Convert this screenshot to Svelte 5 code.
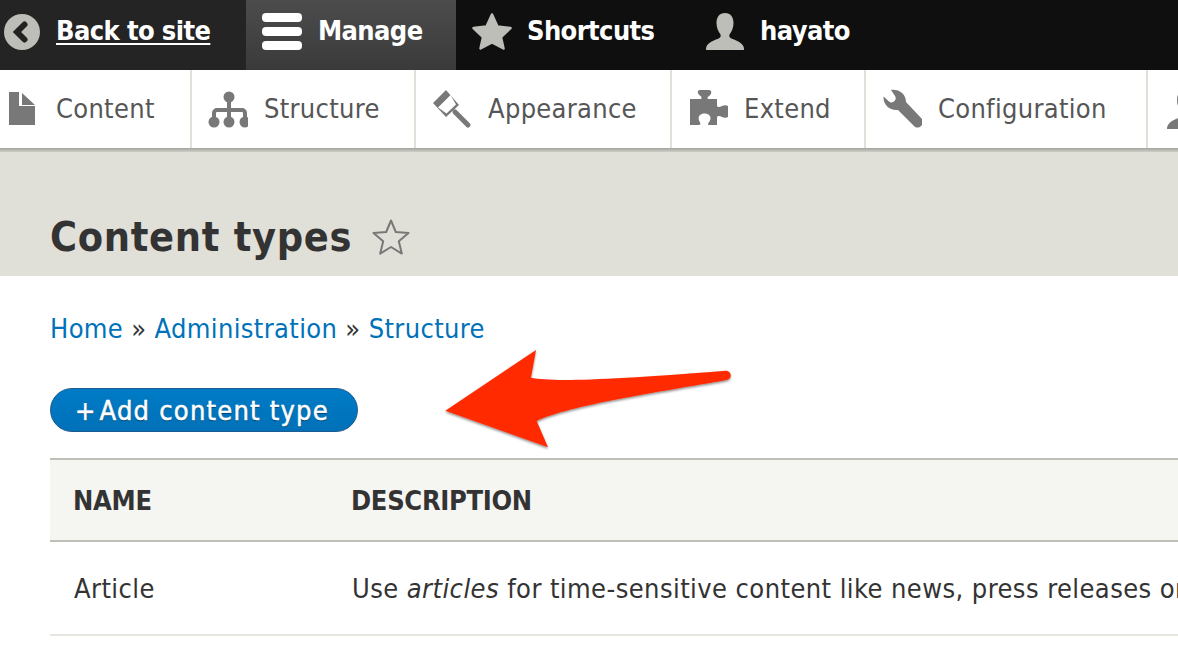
<script>
  const tray = [
    { label: 'Content', icon: 'content', w: 192, vb: '0 0 26 33' },
    { label: 'Structure', icon: 'structure', w: 224, vb: '3 4 40 40' },
    { label: 'Appearance', icon: 'appearance', w: 256, vb: '0 0 40 40' },
    { label: 'Extend', icon: 'extend', w: 194, vb: '3 4 40 40' },
    { label: 'Configuration', icon: 'config', w: 282, vb: '4 4 40 40' },
    { label: 'People', icon: 'people', w: 200, vb: '0 0 40 40' }
  ];
</script>

<div class="page">
  <nav class="bar">
    <a class="tab back" href="#back">
      <svg class="ic-back" viewBox="0 0 36 36"><circle cx="18" cy="18" r="18" fill="#bebeb8"/><path d="M20.500 10.500 13 18l7.500 7.500" fill="none" stroke="#222" stroke-width="6" stroke-linecap="round"/></svg>
      <span class="u">Back to site</span>
    </a>
    <a class="tab manage" href="#manage">
      <svg class="ic-menu" viewBox="0 0 40 37"><g fill="#fff"><rect width="40" height="9" rx="4"/><rect y="14" width="40" height="9" rx="4"/><rect y="28" width="40" height="9" rx="4"/></g></svg>
      <span>Manage</span>
    </a>
    <a class="tab shortcuts" href="#shortcuts">
      <svg class="ic-star" viewBox="0 0 40 37"><path d="M20 1.500 25.500 13.500 38.500 15 29 24 31.500 35.500 20 29.500 8.500 35.500 11 24 1.500 15 14.500 13.500Z" fill="#bebeb8" stroke="#bebeb8" stroke-width="2.500" stroke-linejoin="round"/></svg>
      <span>Shortcuts</span>
    </a>
    <a class="tab user" href="#user">
      <svg class="ic-user" viewBox="0 0 38 37"><path d="M19 0c5.500 0 8.500 4 8.500 10 0 5-2 9-4 11.500-.8 2 .5 3.500 3 4.500 4 1.500 9 3.500 11 7.500.4 1 .5 2 .5 3.500H0c0-1.500.1-2.500.5-3.500 2-4 7-6 11-7.500 2.500-1 3.800-2.500 3-4.500-2-2.500-4-6.500-4-11.500 0-6 3-10 8.500-10Z" fill="#bebeb8"/></svg>
      <span>hayato</span>
    </a>
  </nav>

  <nav class="tray">
    {#each tray as item}
      <a class="item" class:first={item.icon === 'content'} class:last={item.icon === 'people'} href="#{item.icon}" style="width:{item.w}px">
        <svg class="ti" viewBox={item.vb}>
          {#if item.icon === 'content'}
            <path d="M0 0h10v14h16v19H0Z M13 1v12h13Z" fill="#787878"/>
          {:else if item.icon === 'structure'}
            <g fill="#787878"><circle cx="24" cy="12" r="5.500"/><circle cx="9" cy="37" r="5.500"/><circle cx="24" cy="37" r="5.500"/><circle cx="40" cy="37" r="5.500"/></g>
            <path d="M9 37V28a3 3 0 0 1 3-3H37a3 3 0 0 1 3 3V37M24 12V37" fill="none" stroke="#787878" stroke-width="4"/>
          {:else if item.icon === 'appearance'}
            <path d="M14 1 1 14l13 14 13-12Z M18.500 6 6 18.500l8.500 6L24 15.500Z" fill="#787878" fill-rule="evenodd"/>
            <path d="M8 12l7-7" stroke="#787878" stroke-width="6"/>
            <path d="M23 23 36 36" stroke="#787878" stroke-width="5" stroke-linecap="round"/>
          {:else if item.icon === 'extend'}
            <path d="M5 14H15C17 14 17 12 15.500 11 12 9 12 5 15 5H24C27 5 27 9 24 11 22 12 22 14 24 14H32V20C32 23 35 22 37 21 41 19 46 21 46 26.500 46 32 41 34 37 32 35 31 32 30 32 33V40H24C22.500 40 23 38 24.500 36.500 27 33 25 28.500 19.500 28.500 14 28.500 12.500 33 14.500 36.500 15.500 38 16 40 14 40H5Z" fill="#787878"/>
          {:else if item.icon === 'config'}
            <path d="M13 5C21 4 28 9 28 17L44 34C46 37 45 39 43 41 41 43 38 43 36 41L20 25C12 26 5 20 5.500 11.500L11 16.500C13 18 15 17.500 16.500 16 18 14.500 18 12.500 17 11Z" fill="#787878"/>
          {:else}
            <path d="M20 0c6 0 9 5 9 11 0 6-2.500 10-4.500 13-.8 2 .5 4 3 5 4 1.600 9 3.500 11 8 .5 1 .5 2 .5 3H1c0-1 0-2 .5-3 2-4.500 7-6.400 11-8 2.500-1 3.800-3 3-5-2-3-4.500-7-4.500-13 0-6 3-11 9-11Z" fill="#787878"/>
          {/if}
        </svg>
        <span>{item.label}</span>
      </a>
    {/each}
  </nav>
  <div class="edge"></div>

  <header class="head">
    <h1>Content types</h1>
    <svg class="ic-fav" viewBox="0 0 38 38"><path d="M19 2.500 23.800 14l12.700 1-9.700 8.300 3 12.300L19 29l-10.800 6.600 3-12.300L1.500 15l12.700-1Z" fill="none" stroke="#787878" stroke-width="2" stroke-linejoin="round"/></svg>
  </header>

  <main class="main">
    <p class="crumbs"><a href="#home">Home</a> » <a href="#admin">Administration</a> » <a href="#structure">Structure</a></p>
    <a class="btn" href="#add"><span class="plus">+</span>Add content type</a>
    <table>
      <thead><tr><th class="c1">NAME</th><th>DESCRIPTION</th></tr></thead>
      <tbody><tr><td class="c1">Article</td><td>Use <em>articles</em> for time-sensitive content like news, press releases or blog posts.</td></tr></tbody>
    </table>
  </main>

  <svg class="arrow" viewBox="0 0 300 110" aria-hidden="true">
    <defs><filter id="sh" x="-5%" y="-5%" width="110%" height="115%"><feDropShadow dx="0" dy="1.500" stdDeviation="1.200" flood-color="#000" flood-opacity=".45"/></filter></defs>
    <path filter="url(#sh)" fill="#ff2c00" d="M5.300 70.700 96 10l-5 27.700c20 4 70 3 194.500-7 6-.4 7.500 8.500 1 9.300C220 52 130 65 96.700 81l11.300 26.300Z"/>
  </svg>
</div>

<style>
  :global(body) { margin: 0; background: #fff; }
  .page {
    position: relative;
    width: 1178px;
    height: 666px;
    overflow: hidden;
    font-family: "DejaVu Sans Condensed", "DejaVu Sans", "Liberation Sans", sans-serif;
    font-stretch: condensed;
    color: #333;
  }
  a { text-decoration: none; }
  .bar {
    display: flex;
    height: 70px;
    background: #0f0f0f;
  }
  .tab {
    display: flex;
    align-items: center;
    padding-bottom: 8px;
    color: #fff;
    font-weight: 700;
    font-size: 27px;
    letter-spacing: -0.6px;
    white-space: nowrap;
    box-sizing: border-box;
  }
  .tab span { margin-bottom: 2px; }
  .back { width: 246px; padding-left: 4px; gap: 16px; background: #242424; }
  .u { text-decoration: underline; text-underline-offset: 3px; }
  .manage { width: 210px; padding-left: 16px; gap: 16px; background: linear-gradient(#4c4c4c, #3a3a3a); }
  .shortcuts { width: 232px; padding-left: 16px; gap: 15px; }
  .user { padding-left: 18px; gap: 16px; }
  .ic-back { width: 36px; height: 36px; margin-top: 2px; }
  .ic-menu { width: 40px; height: 37px; }
  .ic-star { width: 40px; height: 37px; }
  .ic-user { width: 38px; height: 37px; }

  .tray {
    display: flex;
    height: 78px;
    background: #fff;
  }
  .edge {
    height: 4px;
    background: linear-gradient(#a3a3a0, #cdcdc6);
  }
  .item {
    display: flex;
    flex: none;
    align-items: center;
    box-sizing: border-box;
    gap: 16px;
    padding-left: 16px;
    border-right: 2px solid #e0e0d8;
    color: #565656;
    font-size: 27px;
    letter-spacing: 0.3px;
  }
  .item span { margin-bottom: 2px; }
  .item.first { padding-left: 9px; gap: 21px; }
  .item.last { padding-left: 18px; }
  .ti { width: 40px; height: 40px; flex: none; }
  .item.first .ti { width: 26px; height: 33px; margin-bottom: 1px; }

  .head {
    display: flex;
    align-items: center;
    gap: 20px;
    height: 124px;
    box-sizing: border-box;
    padding: 46px 0 0 50px;
    background: #e0e0d8;
  }
  h1 {
    margin: 0;
    font-size: 41px;
    font-weight: 700;
    letter-spacing: 0.7px;
    color: #333;
    line-height: 1;
  }
  .ic-fav { width: 38px; height: 38px; }

  .main { padding: 36px 0 0 50px; }
  .crumbs {
    margin: 0;
    font-size: 27px;
    line-height: 34px;
    letter-spacing: 0.36px;
    white-space: nowrap;
    color: #333;
  }
  .crumbs a { color: #0072b9; }
  .btn {
    display: inline-flex;
    align-items: center;
    box-sizing: border-box;
    width: 308px;
    height: 44px;
    margin-top: 42px;
    padding-left: 24px;
    border: 1px solid #1e5c90;
    border-radius: 22px;
    background: linear-gradient(#007bc6, #0071b8);
    color: #fff;
    font-size: 27px;
    font-weight: 400;
    letter-spacing: 1.23px;
    -webkit-text-stroke: 0.5px #fff;
    text-shadow: 0 1px 1px rgba(0, 0, 0, .5);
    white-space: nowrap;
  }
  .plus { margin-right: 3px; }
  table {
    display: block;
    margin-top: 26px;
    border-collapse: collapse;
    width: 1128px;
    overflow: hidden;
    font-size: 27px;
    white-space: nowrap;
  }
  thead tr { background: #f5f5f2; border-top: 2px solid #bfbfba; border-bottom: 2px solid #bfbfba; }
  th {
    height: 80px;
    padding: 0 24px 0 23px;
    text-align: left;
    font-weight: 700;
    color: #333;
    letter-spacing: -0.3px;
    width: 1000px;
  }
  td {
    height: 92px;
    padding: 0 24px;
    color: #333;
    letter-spacing: 0.42px;
    border-bottom: 2px solid #e6e6e1;
  }
  th.c1, td.c1 { width: 230px; min-width: 230px; }
  .arrow {
    position: absolute;
    left: 440px;
    top: 340px;
    width: 300px;
    height: 110px;
  }
</style>
